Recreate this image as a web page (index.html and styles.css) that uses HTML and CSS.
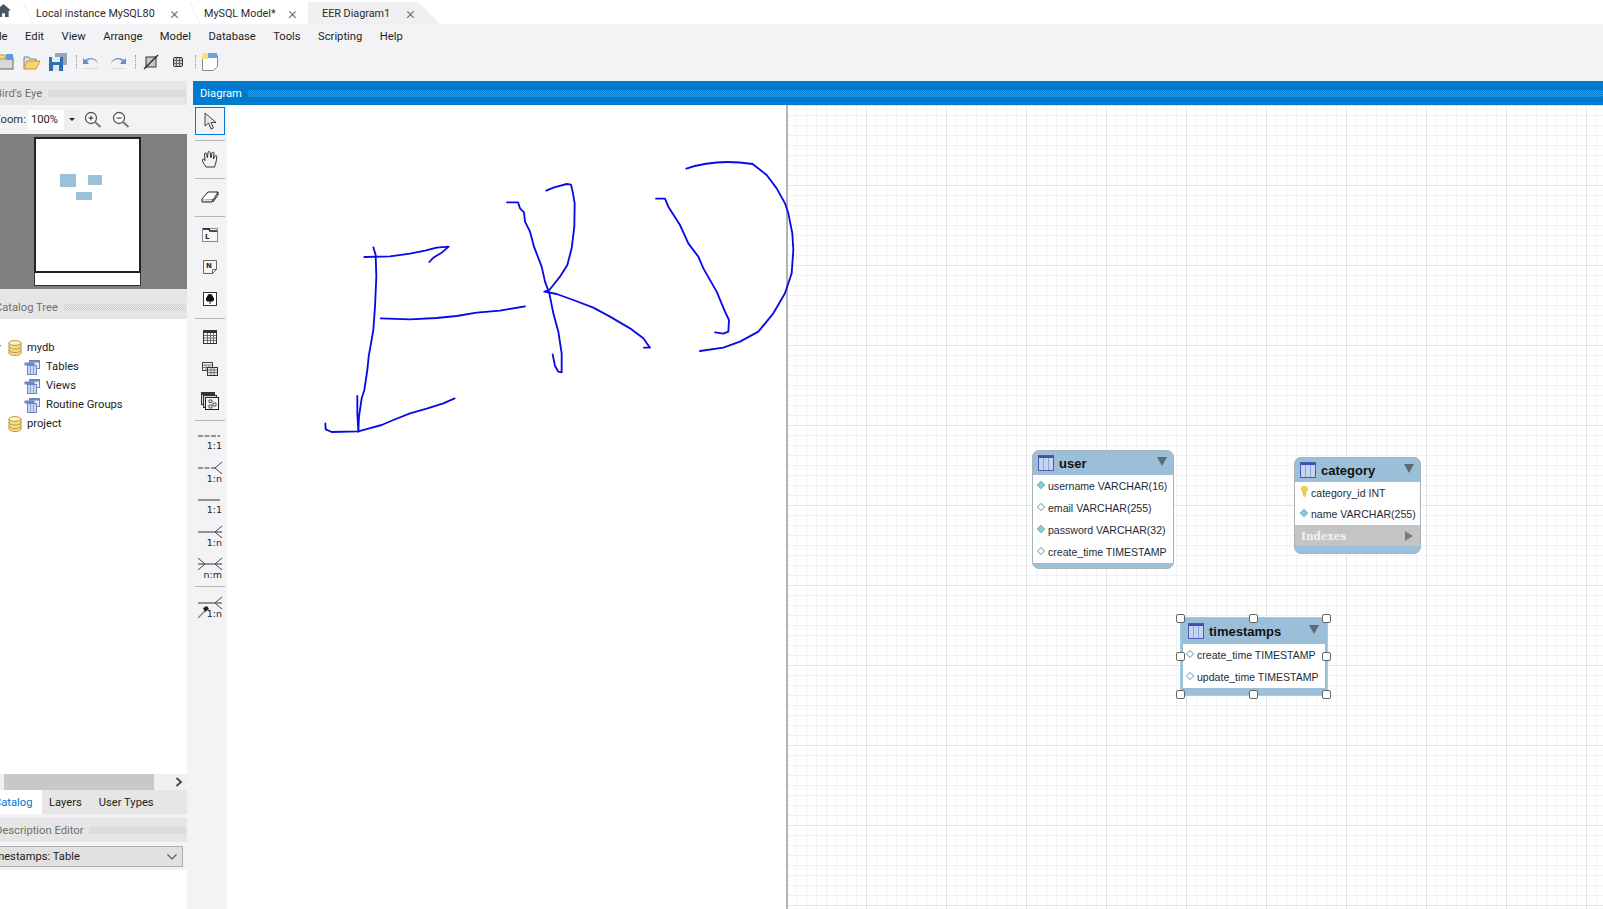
FILE: index.html
```html
<!DOCTYPE html>
<html lang="en">
<head>
    <meta charset="UTF-8">
    <title>MySQL Workbench - EER Diagram</title>
    <link rel="stylesheet" href="styles.css">
</head>
<body>
    <svg class="defs" width="0" height="0">
        <symbol id="db" viewBox="0 0 14 16">
            <path d="M1 3v10c0 1.4 2.7 2.5 6 2.5s6-1.100 6-2.500V3z" fill="#f6dc8a" stroke="#b8993a"/>
            <ellipse cx="7" cy="3" rx="6" ry="2.400" fill="#fdf3c4" stroke="#b8993a"/>
            <path d="M1 6.500c0 1.400 2.700 2.500 6 2.500s6-1.100 6-2.500M1 10c0 1.400 2.700 2.500 6 2.500s6-1.100 6-2.500" fill="none" stroke="#b8993a"/>
        </symbol>
        <symbol id="grp" viewBox="0 0 16 16">
            <rect x="5.500" y="1.500" width="10" height="8" fill="#e4ebf8" stroke="#6d86c4"/>
            <rect x="5.500" y="1.500" width="10" height="2" fill="#6d86c4"/>
            <rect x="0.500" y="3.500" width="10" height="3" fill="#6d86c4"/>
            <rect x="3.500" y="6.500" width="9" height="9" fill="#c9d7f2" stroke="#6d86c4"/>
            <path d="M6.500 7v8M9.500 7v8" stroke="#8ea5d8"/>
        </symbol>
        <symbol id="tbl-ico" viewBox="0 0 16 16">
            <rect x="0.500" y="0.500" width="15" height="15" fill="#c6d4f0" stroke="#4a5bb0"/>
            <rect x="1" y="1" width="14" height="2" fill="#3f4fb0"/>
            <path d="M5.500 3v12M10.500 3v12" stroke="#8fa3da"/>
        </symbol>
    </svg>

    <div class="app">
        <div class="tabstrip">
            <div class="home-tab">
                <svg width="17" height="15" viewBox="0 0 18 16"><path d="M9 1 1 8h2.500v7h4v-4h3v4h4V8H17z" fill="#4b5563"/></svg>
            </div>
            <div class="tab tab-local">Local instance MySQL80<span class="tab-x">×</span></div>
            <div class="tab tab-model">MySQL Model*<span class="tab-x">×</span></div>
            <div class="tab tab-active">EER Diagram1<span class="tab-x">×</span></div>
        </div>

        <div class="menubar">
            <span>File</span><span>Edit</span><span>View</span><span>Arrange</span><span>Model</span><span>Database</span><span>Tools</span><span>Scripting</span><span>Help</span>
        </div>

        <div class="toolbar">
            <svg class="tb-new" width="20" height="20" viewBox="0 0 20 20"><rect x="3" y="6" width="15" height="11" fill="#d8d8d8" stroke="#666"/><rect x="11" y="2" width="7" height="6" fill="#5d9bd5"/><path d="M4 3h6v4H4z" fill="#f2d98a" stroke="#b59a45"/></svg>
            <svg class="tb-open" width="20" height="20" viewBox="0 0 20 20"><path d="M3 17V5h5l1 2h6v3" fill="#d9dce2" stroke="#7d8794"/><path d="M3 17 6 9h13l-4 8z" fill="#f5d56e" stroke="#c39a2d"/></svg>
            <svg class="tb-save" width="20" height="20" viewBox="0 0 20 20"><rect x="7" y="1" width="12" height="12" fill="#9aa7b8"/><rect x="1" y="5" width="14" height="14" fill="#2f6db5"/><rect x="4" y="5" width="8" height="5" fill="#e6edf5"/><rect x="5" y="13" width="6" height="6" fill="#dfe6ee"/></svg>
            <i class="tb-sep tb-sep-a"></i>
            <svg class="tb-undo" width="20" height="20" viewBox="0 0 20 20"><path d="M17 12C15 7 9 6 6 9l2 3H2V6l2 2c5-4 12-2 13 4z" fill="#5d93cb"/><rect x="3" y="16" width="14" height="1" fill="#d8d8dc"/></svg>
            <svg class="tb-redo" width="20" height="20" viewBox="0 0 20 20"><path d="M3 12C5 7 11 6 14 9l-2 3h6V6l-2 2C11 4 4 6 3 12z" fill="#5d93cb"/><rect x="3" y="16" width="14" height="1" fill="#d8d8dc"/></svg>
            <i class="tb-sep tb-sep-b"></i>
            <svg class="tb-hide" width="16" height="16" viewBox="0 0 16 16"><rect x="3" y="3" width="10" height="10" fill="#c9c9c9" stroke="#333"/><path d="M1 15 15 1" stroke="#222" stroke-width="1.200"/></svg>
            <svg class="tb-grid" width="14" height="14" viewBox="0 0 14 14"><rect x="2.500" y="2.500" width="9" height="9" rx="1.500" fill="#cfcfcf" stroke="#333"/><path d="M5.500 3v8M8.500 3v8M3 5.500h8M3 8.500h8" stroke="#666"/></svg>
            <i class="tb-sep tb-sep-c"></i>
            <svg class="tb-note" width="18" height="20" viewBox="0 0 18 20"><path d="M1.500 3.500h15v11l-4 4h-11z" fill="#fff" stroke="#8a8a8a"/><rect x="7" y="1" width="9" height="5" fill="#6aa5dc"/><rect x="1" y="1" width="6" height="6" fill="#f5e27a"/></svg>
        </div>

        <div class="workspace">
            <aside class="sidebar">
                <div class="panel-head"><span>Bird's Eye</span><i class="dots"></i></div>
                <div class="zoom-row">
                    <span class="zoom-label">Zoom:</span>
                    <div class="zoom-select"><span class="zoom-value">100%</span><span class="zoom-drop"><i class="caret"></i></span></div>
                    <svg class="zoom-in" width="18" height="18" viewBox="0 0 18 18"><circle cx="7" cy="7" r="5.500" fill="#fff" stroke="#555" stroke-width="1.300"/><path d="M11 11l5.500 5" stroke="#777" stroke-width="2"/><path d="M4.500 7h5M7 4.500v5" stroke="#222"/></svg>
                    <svg class="zoom-out" width="18" height="18" viewBox="0 0 18 18"><circle cx="7" cy="7" r="5.500" fill="#fff" stroke="#555" stroke-width="1.300"/><path d="M11 11l5.500 5" stroke="#777" stroke-width="2"/><path d="M4.500 7h5" stroke="#222"/></svg>
                </div>
                <div class="birdseye">
                    <div class="mini-page">
                        <div class="mini-sheet">
                            <i class="mini-tbl mini-a"></i>
                            <i class="mini-tbl mini-b"></i>
                            <i class="mini-tbl mini-c"></i>
                        </div>
                        <div class="mini-foot"></div>
                    </div>
                </div>
                <div class="panel-head panel-catalog"><span>Catalog Tree</span><i class="dots"></i></div>
                <div class="tree">
                    <div class="tree-row"><i class="twist"></i><svg width="14" height="16"><use href="#db"/></svg><span>mydb</span></div>
                    <div class="tree-row tree-child"><svg width="16" height="16"><use href="#grp"/></svg><span>Tables</span></div>
                    <div class="tree-row tree-child"><svg width="16" height="16"><use href="#grp"/></svg><span>Views</span></div>
                    <div class="tree-row tree-child"><svg width="16" height="16"><use href="#grp"/></svg><span>Routine Groups</span></div>
                    <div class="tree-row"><i class="twist twist-closed"></i><svg width="14" height="16"><use href="#db"/></svg><span>project</span></div>
                </div>
                <div class="hscroll">
                    <i class="hscroll-thumb"></i>
                    <svg width="8" height="10" viewBox="0 0 8 10"><path d="M1.500 1 6 5 1.500 9" fill="none" stroke="#444" stroke-width="1.800"/></svg>
                </div>
                <div class="side-tabs">
                    <span class="side-tab side-tab-on">Catalog</span>
                    <span class="side-tab">Layers</span>
                    <span class="side-tab">User Types</span>
                </div>
                <div class="panel-head panel-desc"><span>Description Editor</span><i class="dots"></i></div>
                <div class="desc-row">
                    <div class="desc-select"><span>timestamps: Table</span>
                        <svg width="12" height="8" viewBox="0 0 12 8"><path d="M1.500 1.500 6 6l4.500-4.500" fill="none" stroke="#555" stroke-width="1.100"/></svg>
                    </div>
                </div>
            </aside>

            <main class="diagram">
                <div class="diagram-head"><span>Diagram</span><i class="dots dots-blue"></i></div>
                <div class="diagram-body">
                    <nav class="palette">
                        <div class="tool tool-on">
                            <svg width="14" height="18" viewBox="0 0 14 18"><path d="M2 1v13l3.500-3 2.500 6 2.500-1-2.500-5.500H13z" fill="#e8e8e8" stroke="#444"/></svg>
                        </div>
                        <hr class="sep">
                        <div class="tool">
                            <svg width="18" height="18" viewBox="0 0 18 18"><path d="M5 17C3 14 1 11 1.500 9.500c.6-1 2-.3 2.500 1L3.500 4c0-1.200 1.700-1.200 2 0L6.500 8 7 2.500c0-1.200 2-1.200 2.200 0L10 8l1-5c.3-1.200 2-1 2 .2L12.500 9l1.500-3c.6-1 2-.5 1.800.6C15.500 10 15 13 13.500 17z" fill="#f3f3f3" stroke="#333"/></svg>
                        </div>
                        <hr class="sep">
                        <div class="tool">
                            <svg width="18" height="14" viewBox="0 0 18 14"><path d="M1 9 7 2h10l-5 8H2z" fill="#fff" stroke="#222"/><path d="M1 9v3h10l1-2" fill="#ddd" stroke="#222"/><path d="M17 2v3l-5 7" fill="none" stroke="#222"/></svg>
                        </div>
                        <hr class="sep">
                        <div class="tool">
                            <svg width="16" height="14" viewBox="0 0 16 14"><rect x="0.500" y="0.500" width="15" height="13" fill="#f7f7f7" stroke="#888"/><path d="M1 1h6l1 2h7" fill="none" stroke="#111" stroke-width="1.400"/><text x="3" y="11" class="ico-text">L</text></svg>
                        </div>
                        <div class="tool">
                            <svg width="14" height="14" viewBox="0 0 14 14"><path d="M.5.500h13v9l-4 4h-9z" fill="#f7f7f7" stroke="#666"/><path d="M9.500 13.500v-4h4" fill="none" stroke="#666"/><text x="3" y="8" class="ico-text">N</text></svg>
                        </div>
                        <div class="tool">
                            <svg width="14" height="14" viewBox="0 0 14 14"><rect x="0.500" y="0.500" width="13" height="13" fill="#fff" stroke="#333"/><path d="M7 2c-2 0-3 2-3 3-1.500 1-1.500 4 .5 4.500H6.500V12h1V9.500H9.500C11.500 9 11.500 6 10 5c0-1-1-3-3-3z" fill="#111"/></svg>
                        </div>
                        <hr class="sep">
                        <div class="tool">
                            <svg width="14" height="14" viewBox="0 0 14 14"><rect x="0.500" y="0.500" width="13" height="13" fill="#f4f4f4" stroke="#333"/><rect x="1" y="1" width="12" height="2" fill="#333"/><path d="M1 5.500h12M1 8h12M1 10.500h12M4.500 3v10M7.500 3v10M10.500 3v10" stroke="#555" stroke-width=".8"/></svg>
                        </div>
                        <div class="tool">
                            <svg width="16" height="14" viewBox="0 0 16 14"><rect x="0.500" y="0.500" width="10" height="8" fill="#eee" stroke="#444"/><path d="M1 3h9M1 5.500h9M4 3v5M7 3v5" stroke="#666" stroke-width=".8"/><rect x="5.500" y="5.500" width="10" height="8" fill="#eee" stroke="#333"/><path d="M6 8h9M6 10.500h9M9 6v7M12 6v7" stroke="#555" stroke-width=".8"/></svg>
                        </div>
                        <div class="tool">
                            <svg width="18" height="18" viewBox="0 0 18 18"><rect x="0.500" y="0.500" width="13" height="12" fill="#ddd" stroke="#333"/><rect x="1" y="1" width="12" height="2" fill="#333"/><rect x="2.500" y="3.500" width="13" height="12" fill="#ddd" stroke="#333"/><rect x="4.500" y="5.500" width="13" height="12" fill="#f5f5f5" stroke="#222"/><path d="M8 8h3v2.500H8zM12 11h3v3h-3zM8 13h3v3H8z" fill="none" stroke="#333" stroke-width=".8"/></svg>
                        </div>
                        <hr class="sep">
                        <div class="tool">
                            <svg width="30" height="32" viewBox="0 0 30 32"><path d="M3 13h22" stroke="#333" stroke-dasharray="5 1.500"/><text x="27" y="26" class="rel-text">1:1</text></svg>
                        </div>
                        <div class="tool">
                            <svg width="30" height="32" viewBox="0 0 30 32"><path d="M3 13h18" stroke="#333" stroke-dasharray="5 1.500"/><path d="M27 7l-7 6 7 6" fill="none" stroke="#444"/><text x="27" y="27" class="rel-text">1:n</text></svg>
                        </div>
                        <div class="tool">
                            <svg width="30" height="32" viewBox="0 0 30 32"><path d="M3 13h22" stroke="#333"/><text x="27" y="26" class="rel-text">1:1</text></svg>
                        </div>
                        <div class="tool">
                            <svg width="30" height="32" viewBox="0 0 30 32"><path d="M3 13h24" stroke="#333"/><path d="M27 7l-7 6 7 6" fill="none" stroke="#444"/><text x="27" y="27" class="rel-text">1:n</text></svg>
                        </div>
                        <div class="tool">
                            <svg width="30" height="32" viewBox="0 0 30 32"><path d="M3 13h24" stroke="#333"/><path d="M27 7l-7 6 7 6M3 7l7 6-7 6" fill="none" stroke="#444"/><text x="27" y="27" class="rel-text">n:m</text></svg>
                        </div>
                        <hr class="sep">
                        <div class="tool">
                            <svg width="30" height="32" viewBox="0 0 30 32"><path d="M3 14h24" stroke="#333"/><path d="M27 8l-7 6 7 6" fill="none" stroke="#444"/><path d="M3 29l8-8" stroke="#888" stroke-width="1.500"/><path d="M8 19l4-2 2 3-4 3z" fill="#222"/><text x="27" y="28" class="rel-text">1:n</text></svg>
                        </div>
                    </nav>

                    <div class="canvas">
                        <div class="canvas-blank"></div>
                        <div class="sheet"></div>

                        <section class="er-table er-user">
                            <header class="er-head"><svg width="16" height="16"><use href="#tbl-ico"/></svg><b>user</b><i class="er-arrow"></i></header>
                            <div class="er-rows">
                                <div class="er-row"><i class="dia dia-full"></i>username VARCHAR(16)</div>
                                <div class="er-row"><i class="dia"></i>email VARCHAR(255)</div>
                                <div class="er-row"><i class="dia dia-full"></i>password VARCHAR(32)</div>
                                <div class="er-row"><i class="dia"></i>create_time TIMESTAMP</div>
                            </div>
                            <div class="er-foot"></div>
                        </section>

                        <section class="er-table er-category">
                            <header class="er-head"><svg width="16" height="16"><use href="#tbl-ico"/></svg><b>category</b><i class="er-arrow"></i></header>
                            <div class="er-rows">
                                <div class="er-row"><svg class="er-key" width="7" height="11" viewBox="0 0 8 12"><path d="M4 0c2 0 3.500 1.300 3.500 3S6.300 6 5.500 6.300V10L4 12 2.500 10V6.300C1.700 6 .5 5 .5 3S2 0 4 0z" fill="#f5d33c" stroke="#c9a21e" stroke-width=".6"/></svg>category_id INT</div>
                                <div class="er-row"><i class="dia dia-full"></i>name VARCHAR(255)</div>
                            </div>
                            <div class="er-indexes"><b>Indexes</b><i class="er-arrow-r"></i></div>
                            <div class="er-foot"></div>
                        </section>

                        <section class="er-table er-timestamps">
                            <header class="er-head"><svg width="16" height="16"><use href="#tbl-ico"/></svg><b>timestamps</b><i class="er-arrow"></i></header>
                            <div class="er-rows">
                                <div class="er-row"><i class="dia"></i>create_time TIMESTAMP</div>
                                <div class="er-row"><i class="dia"></i>update_time TIMESTAMP</div>
                            </div>
                            <div class="er-foot"></div>
                            <i class="hdl h-tl"></i><i class="hdl h-tc"></i><i class="hdl h-tr"></i>
                            <i class="hdl h-ml"></i><i class="hdl h-mr"></i>
                            <i class="hdl h-bl"></i><i class="hdl h-bc"></i><i class="hdl h-br"></i>
                        </section>

                        <!-- ERD escrito a mano encima del lienzo -->
                        <svg class="ink" width="500" height="300" viewBox="0 0 1500 900">
                            <path d="M190 292 197 315 199 380 195 470 190 540 183 580 176 620 172 660 163 720 155 745 147 800 145 845 142 790 142 738"/>
                            <path d="M163 321 240 319 300 311 345 302 380 293 416 290 395 308 370 323 358 336"/>
                            <path d="M212 505 300 508 380 504 440 498 500 488 570 482 645 469"/>
                            <path d="M46 820 47 838 65 846 145 844 175 836 215 825 250 810 300 790 350 776 400 760 434 745"/>
                            <path d="M591 157 624 157 630 175 642 187 645 215 660 245 672 290 695 350 705 395 718 430 730 490 745 545 755 610 755 667 745 665 735 648 728 613"/>
                            <path d="M709 122 730 113 770 102 783 104 788 125 794 160 793 230 785 295 772 345 750 380 730 405 718 420 703 425 740 432 790 450 850 473 900 500 960 535 1000 565 1020 593 1002 593"/>
                            <path d="M1038 146 1065 146 1075 170 1110 225 1135 280 1165 320 1180 355 1220 425 1245 485 1257 510 1255 545 1240 551 1215 547"/>
                            <path d="M1129 56C1180 38 1250 30 1328 42L1370 75 1400 115 1425 160 1435 190 1447 250 1450 300 1445 370 1425 430 1390 490 1345 545 1290 575 1240 593 1170 603"/>
                        </svg>
                    </div>
                </div>
            </main>
        </div>
    </div>
</body>
</html>
```

FILE: styles.css
```css
/* La ventana esta recortada por la izquierda, por eso el margen negativo */
html, body {
    margin: 0;
    height: 100%;
    overflow: hidden;
    background-color: #ffffff;
}

.defs {
    display: block;
    height: 0;
}

.app {
    display: flex;
    flex-direction: column;
    width: calc(100% + 16px);
    height: 909px;
    margin-left: -16px;
    font-family: Roboto, "Liberation Sans", sans-serif;
    font-size: 11.2px;
    color: #1e1e1e;
}

i {
    display: block;
}

/* Pestanas */
.tabstrip {
    display: flex;
    align-items: stretch;
    height: 24px;
    background-color: #ffffff;
    flex-shrink: 0;
}

.home-tab {
    display: flex;
    align-items: flex-start;
    width: 39px;
    padding: 3px 0 0 11px;
    box-sizing: border-box;
}

.tab {
    display: flex;
    align-items: center;
    height: 24px;
    box-sizing: border-box;
    padding-top: 2px;
    font-size: 10.800px;
    white-space: nowrap;
    color: #2b2b2b;
}

.tab-local,
.tab-model {
    background-image: linear-gradient(to top right, transparent calc(50% - 0.5px), #e4e4e4, transparent calc(50% + 0.5px));
    background-repeat: no-repeat;
    background-size: 10px 22px;
    background-position: 0 2px;
}

.tab-local {
    width: 167px;
    padding-left: 13px;
}

.tab-model {
    width: 118px;
    padding-left: 14px;
}

.tab-active {
    width: 132px;
    padding-left: 14px;
    background-color: #f0f0f2;
    clip-path: polygon(0 2px, 110px 2px, 132px 24px, 0 24px);
}

.tab-x {
    margin-left: auto;
    font-size: 17px;
    font-weight: 300;
    line-height: 1;
    color: #666666;
}

.tab-local .tab-x,
.tab-model .tab-x {
    margin-right: 11px;
}

.tab-active .tab-x {
    margin-right: 25px;
}

/* Menu y barra de herramientas */
.menubar {
    display: flex;
    align-items: center;
    gap: 17.500px;
    height: 24px;
    padding-left: 6px;
    background-color: #f3f3f5;
    flex-shrink: 0;
}

.toolbar {
    display: flex;
    align-items: center;
    height: 33px;
    padding: 0 0 6px 11px;
    box-sizing: border-box;
    background-color: #f3f3f5;
    flex-shrink: 0;
}

.tb-open { margin-left: 6px; }
.tb-save { margin-left: 7px; }
.tb-sep-a { margin-left: 8px; }
.tb-undo { margin-left: 4px; }
.tb-redo { margin-left: 7px; }
.tb-sep-b { margin-left: 7px; }
.tb-hide { margin-left: 7px; }
.tb-grid { margin-left: 12px; }
.tb-sep-c { margin-left: 10px; }
.tb-note { margin-left: 5px; }

.tb-sep {
    width: 0;
    height: 14px;
    border-left: 1px dotted #999999;
}

/* Cuerpo */
.workspace {
    display: flex;
    flex: 1;
    min-height: 0;
    background-color: #f3f3f5;
}

.sidebar {
    display: flex;
    flex-direction: column;
    width: 203px;
    margin-right: 6px;
    flex-shrink: 0;
}

.panel-head {
    display: flex;
    align-items: center;
    gap: 6px;
    height: 24px;
    padding-left: 11px;
    background-color: #e6e6e6;
    color: #6f6f6f;
    flex-shrink: 0;
    white-space: nowrap;
}

.panel-catalog {
    height: 30px;
    padding-top: 6px;
    box-sizing: border-box;
}

.panel-desc {
    margin-top: 4px;
}

.dots {
    flex: 1;
    height: 7px;
    margin-right: 1px;
    background: repeating-conic-gradient(#d2d2d2 0 25%, transparent 0 50%) 0 0 / 2px 2px;
}

.dots-blue {
    margin-right: 0;
    background: repeating-conic-gradient(#3c9bdc 0 25%, transparent 0 50%) 0 0 / 2px 2px;
}

.zoom-row {
    display: flex;
    align-items: center;
    height: 29px;
    box-sizing: border-box;
    padding-left: 10px;
    color: #333333;
}

.zoom-label {
    width: 28px;
}

.zoom-select {
    display: flex;
    align-items: center;
    justify-content: space-between;
    width: 52px;
    height: 20px;
    margin-left: 6px;
    background-color: #ffffff;
}

.zoom-value {
    padding-left: 3px;
    color: #222222;
}

.zoom-drop {
    display: flex;
    align-items: center;
    justify-content: center;
    width: 16px;
    height: 20px;
    background-color: #eeeeee;
}

.caret {
    border-left: 3px solid transparent;
    border-right: 3px solid transparent;
    border-top: 3px solid #222222;
}

.zoom-in { margin-left: 4px; }
.zoom-out { margin-left: 10px; }

.birdseye {
    height: 155px;
    background-color: #808080;
    flex-shrink: 0;
    padding: 3px 0 0 50px;
    box-sizing: border-box;
}

.mini-page {
    width: 107px;
}

.mini-sheet {
    position: relative;
    height: 136px;
    box-sizing: border-box;
    background-color: #ffffff;
    border: 2px solid #222222;
}

.mini-foot {
    height: 13px;
    background-color: #ffffff;
    border: 1px solid #333333;
    border-top: 0;
    box-sizing: border-box;
}

.mini-tbl {
    position: absolute;
    background-color: #9dc0d9;
}

.mini-a {
    left: 24px;
    top: 35px;
    width: 16px;
    height: 13px;
}

.mini-b {
    left: 52px;
    top: 36px;
    width: 14px;
    height: 10px;
}

.mini-c {
    left: 40px;
    top: 53px;
    width: 16px;
    height: 8px;
}

.tree {
    flex: 1;
    padding-top: 19px;
    background-color: #ffffff;
}

.tree-row {
    display: flex;
    align-items: center;
    gap: 5px;
    height: 19px;
    padding-left: 22px;
    color: #222222;
}

.tree-row svg {
    flex-shrink: 0;
}

.tree-child {
    padding-left: 40px;
    gap: 6px;
}

.twist {
    width: 0;
    height: 0;
    margin-left: -11px;
    margin-right: 2px;
    border-left: 3px solid transparent;
    border-right: 3px solid transparent;
    border-top: 5px solid #44546a;
}

.twist-closed {
    border-top: 2px solid transparent;
    border-bottom: 2px solid transparent;
    border-left: 3px solid #8b97a5;
    border-right: 0;
    margin-right: 5px;
}

.hscroll {
    display: flex;
    align-items: center;
    justify-content: space-between;
    height: 16px;
    padding: 0 4px 0 20px;
    background-color: #f0f0f0;
    flex-shrink: 0;
}

.hscroll-thumb {
    width: 150px;
    height: 16px;
    background-color: #c8c8c8;
}

.side-tabs {
    display: flex;
    height: 24px;
    background-color: #e6e6e6;
    flex-shrink: 0;
}

.side-tab {
    display: flex;
    align-items: center;
    padding: 0 8px;
    color: #222222;
}

.side-tab-on {
    width: 58px;
    box-sizing: border-box;
    padding: 0 0 0 10px;
    background-color: #ffffff;
    color: #0078d7;
    margin-right: 7px;
}

.side-tab:nth-child(2) {
    padding: 0;
    margin-right: 17px;
}

.side-tab:last-child {
    padding: 0;
}

.desc-row {
    height: 28px;
    box-sizing: border-box;
    padding: 4px 4px 0 0;
    flex-shrink: 0;
}

.desc-select {
    display: flex;
    align-items: center;
    justify-content: space-between;
    height: 21px;
    box-sizing: border-box;
    padding: 0 4px 0 3px;
    background-color: #e1e1e1;
    border: 1px solid #adadad;
}

.sidebar::after {
    content: "";
    height: 39px;
    background-color: #ffffff;
    flex-shrink: 0;
}

/* Diagrama */
.diagram {
    display: flex;
    flex-direction: column;
    flex: 1;
    min-width: 0;
}

.diagram-head {
    display: flex;
    align-items: center;
    gap: 6px;
    height: 24px;
    padding-left: 7px;
    background-color: #007acc;
    color: #ffffff;
    flex-shrink: 0;
}

.diagram-body {
    display: flex;
    flex: 1;
    min-height: 0;
}

.palette {
    width: 34px;
    padding: 2px 2px 0;
    box-sizing: border-box;
    flex-shrink: 0;
}

.tool {
    display: flex;
    align-items: center;
    justify-content: center;
    height: 32px;
}

.tool-on {
    height: 28px;
    margin-bottom: 5px;
    box-sizing: border-box;
    border: 1px solid #0078d7;
}

.sep {
    height: 1px;
    margin: 3px 0 2px;
    border: 0;
    background-color: #b8b8b8;
}

.ico-text {
    font-family: "DejaVu Sans", sans-serif;
    font-size: 7px;
    font-weight: bold;
    fill: #222222;
}

.rel-text {
    font-family: "DejaVu Sans", sans-serif;
    font-size: 9.500px;
    fill: #222222;
    text-anchor: end;
}

.canvas {
    position: relative;
    display: flex;
    flex: 1;
    background-color: #ffffff;
    overflow: hidden;
}

.canvas-blank {
    width: 559px;
    flex-shrink: 0;
}

.sheet {
    flex: 1;
    border-left: 2px solid #b4b4b4;
    background-image:
        linear-gradient(to right, #e4e4e4 1px, transparent 1px),
        linear-gradient(to bottom, #e4e4e4 1px, transparent 1px),
        linear-gradient(to right, #f2f2f2 1px, transparent 1px),
        linear-gradient(to bottom, #f2f2f2 1px, transparent 1px);
    background-size: 80px 80px, 80px 80px, 10px 10px, 10px 10px;
    background-position: 78px 0, 0 0, 8px 0, 0 0;
}

.ink {
    position: absolute;
    left: 83px;
    top: 45px;
    pointer-events: none;
}

.ink path {
    fill: none;
    stroke: #0a0ae6;
    stroke-width: 5.500;
    stroke-linejoin: round;
    stroke-linecap: round;
}

/* Tablas EER */
.er-table {
    position: absolute;
    display: flex;
    flex-direction: column;
    box-sizing: border-box;
    background-color: #9bbfd9;
    border: 1px solid #a8b4bc;
    border-radius: 7px;
    font-family: "Liberation Sans", sans-serif;
    font-size: 10.550px;
}

.er-user {
    left: 805px;
    top: 345px;
    width: 142px;
}

.er-category {
    left: 1067px;
    top: 352px;
    width: 127px;
}

.er-timestamps {
    left: 953px;
    top: 512px;
    width: 148px;
    border: 1px solid #9fd0de;
    border-radius: 0;
    padding: 0 2px;
}

.er-head {
    display: flex;
    align-items: center;
    gap: 5px;
    height: 24px;
    padding: 0 6px 0 5px;
    color: #111111;
    font-size: 13px;
}

.er-timestamps .er-head {
    height: 26px;
}

.er-head b {
    flex: 1;
}

.er-arrow {
    width: 0;
    height: 0;
    margin-top: -3px;
    border-left: 5px solid transparent;
    border-right: 5px solid transparent;
    border-top: 9px solid #5f6a72;
}

.er-rows {
    background-color: #ffffff;
}

.er-row {
    display: flex;
    align-items: center;
    gap: 2px;
    height: 22px;
    padding-left: 4px;
    color: #1d2b36;
    white-space: nowrap;
}

.er-timestamps .er-row {
    padding-left: 3px;
}

.er-category .er-row {
    height: 21.500px;
    padding-left: 5px;
}

.er-key {
    margin: -2px 1px 0 1px;
}

.dia {
    width: 6px;
    height: 6px;
    margin: -2px 2px 0 1px;
    transform: rotate(45deg);
    box-sizing: border-box;
    background-color: #ffffff;
    border: 1px solid #8fb5bd;
    flex-shrink: 0;
}

.dia-full {
    background-color: #79d5d8;
}

.er-foot {
    height: 5px;
    flex-shrink: 0;
}

.er-category .er-foot {
    height: 7px;
}

.er-timestamps .er-foot {
    height: 7px;
}

.er-indexes {
    display: flex;
    align-items: center;
    justify-content: space-between;
    height: 21px;
    padding: 0 7px 0 6px;
    background-color: #c4c4c4;
    color: #f2f2f2;
    font-family: "DejaVu Serif", serif;
    font-size: 10.500px;
}

.er-arrow-r {
    border-top: 5px solid transparent;
    border-bottom: 5px solid transparent;
    border-left: 8px solid #7a7a7a;
}

.hdl {
    position: absolute;
    width: 7px;
    height: 7px;
    background-color: #ffffff;
    border: 1.500px solid #666666;
    border-radius: 2px;
}

.h-tl { left: -5px; top: -4px; }
.h-tc { left: 68px; top: -4px; }
.h-tr { right: -4px; top: -4px; }
.h-ml { left: -5px; top: 34px; }
.h-mr { right: -4px; top: 34px; }
.h-bl { left: -5px; bottom: -4px; }
.h-bc { left: 68px; bottom: -4px; }
.h-br { right: -4px; bottom: -4px; }
```
